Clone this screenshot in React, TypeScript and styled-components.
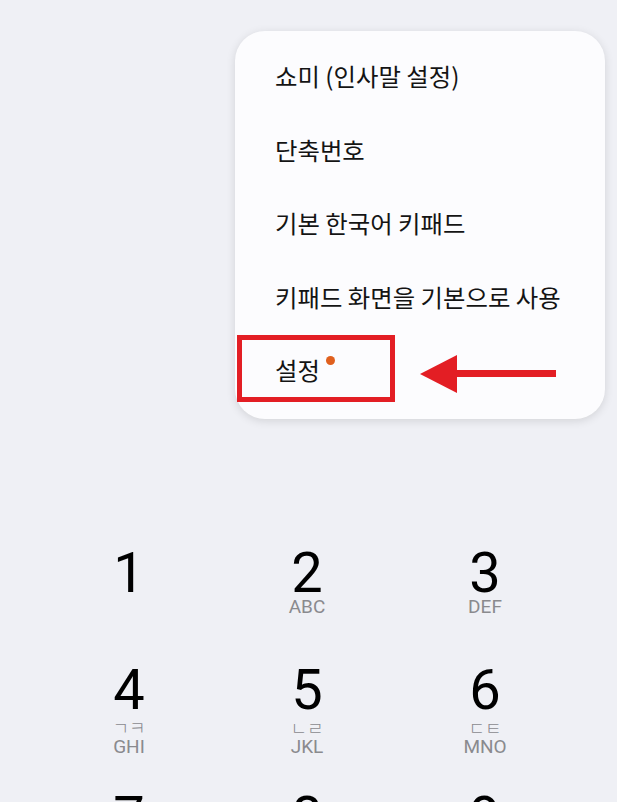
import styled, { createGlobalStyle } from 'styled-components';

const GlobalStyle = createGlobalStyle`
	html, body {
		margin: 0;
		padding: 0;
		background: #eff0f5;
	}
	body {
		font-family: Roboto, 'Noto Sans', 'Noto Sans CJK KR', sans-serif;
		overflow: hidden;
	}
`;

interface IKey {
	digit: string;
	jamo?: string;
	letters?: string;
}

const menuItems = ['쇼미 (인사말 설정)', '단축번호', '기본 한국어 키패드', '키패드 화면을 기본으로 사용'];

const keys: IKey[] = [
	{ digit: '1' },
	{ digit: '2', letters: 'ABC' },
	{ digit: '3', letters: 'DEF' },
	{ digit: '4', jamo: 'ㄱㅋ', letters: 'GHI' },
	{ digit: '5', jamo: 'ㄴㄹ', letters: 'JKL' },
	{ digit: '6', jamo: 'ㄷㅌ', letters: 'MNO' },
	{ digit: '7', jamo: 'ㅂㅍ', letters: 'PQRS' },
	{ digit: '8', jamo: 'ㅅㅎ', letters: 'TUV' },
	{ digit: '9', jamo: 'ㅈㅊ', letters: 'WXYZ' },
];

export default function App() {
	return (
		<Screen>
			<GlobalStyle />
			<Menu>
				{menuItems.map((label) => (
					<MenuItem key={label}>{label}</MenuItem>
				))}
				<MenuItem>
					<Label>
						설정
						<Dot />
					</Label>
				</MenuItem>
				<Highlight />
				<Arrow width='136' height='38' viewBox='0 0 136 38'>
					<polygon points='0,19 37,0 37,38' fill='#e31e24' />
					<rect x='36' y='15' width='100' height='7' fill='#e31e24' />
				</Arrow>
			</Menu>
			<DialPad>
				{keys.map((k) => (
					<Key key={k.digit}>
						<Digit>{k.digit}</Digit>
						{k.jamo && <Jamo>{k.jamo}</Jamo>}
						{k.letters && <Letters $afterJamo={!!k.jamo}>{k.letters}</Letters>}
					</Key>
				))}
			</DialPad>
		</Screen>
	);
}

const Screen = styled.div`
	position: relative;
	width: 617px;
	height: 802px;
	background: #eff0f5;
	overflow: hidden;
`;

const Menu = styled.div`
	position: absolute;
	left: 235px;
	top: 31px;
	width: 370px;
	box-sizing: border-box;
	padding: 8px 0 12px;
	background: #fcfcfe;
	border-radius: 30px;
	box-shadow: 0 2px 10px rgba(0, 0, 0, 0.12);
	z-index: 2;
`;

const MenuItem = styled.div`
	display: flex;
	align-items: center;
	height: 73.5px;
	padding-left: 40px;
	font-family: 'Noto Sans CJK KR', 'Noto Sans', sans-serif;
	font-size: 24.4px;
	color: #141414;
	white-space: nowrap;
`;

const Label = styled.span`
	position: relative;
`;

const Dot = styled.span`
	position: absolute;
	right: -15px;
	top: 4px;
	width: 9px;
	height: 9px;
	border-radius: 50%;
	background: #e0601e;
`;

const Highlight = styled.div`
	position: absolute;
	left: 2px;
	top: 304px;
	width: 158px;
	height: 67px;
	box-sizing: border-box;
	border: 5px solid #e31e24;
`;

const Arrow = styled.svg`
	position: absolute;
	left: 185px;
	top: 324px;
`;

const DialPad = styled.div`
	display: grid;
	grid-template-columns: repeat(3, 178px);
	grid-template-rows: 117px 127px 127px;
	padding: 546px 0 0 40px;
`;

const Key = styled.div`
	display: flex;
	flex-direction: column;
	align-items: center;
`;

const Digit = styled.div`
	font-family: Roboto, sans-serif;
	font-size: 56px;
	line-height: 55px;
	color: #000;
`;

const Jamo = styled.div`
	margin-top: 0;
	font-family: 'Noto Sans CJK KR', sans-serif;
	font-size: 18px;
	line-height: 18px;
	font-weight: 300;
	color: #8a8a8e;
`;

const Letters = styled.div<{ $afterJamo: boolean }>`
	margin-top: ${(props) => (props.$afterJamo ? '1px' : '-4px')};
	font-family: Roboto, sans-serif;
	font-size: 19px;
	line-height: 19px;
	color: #8a8a8e;
`;
